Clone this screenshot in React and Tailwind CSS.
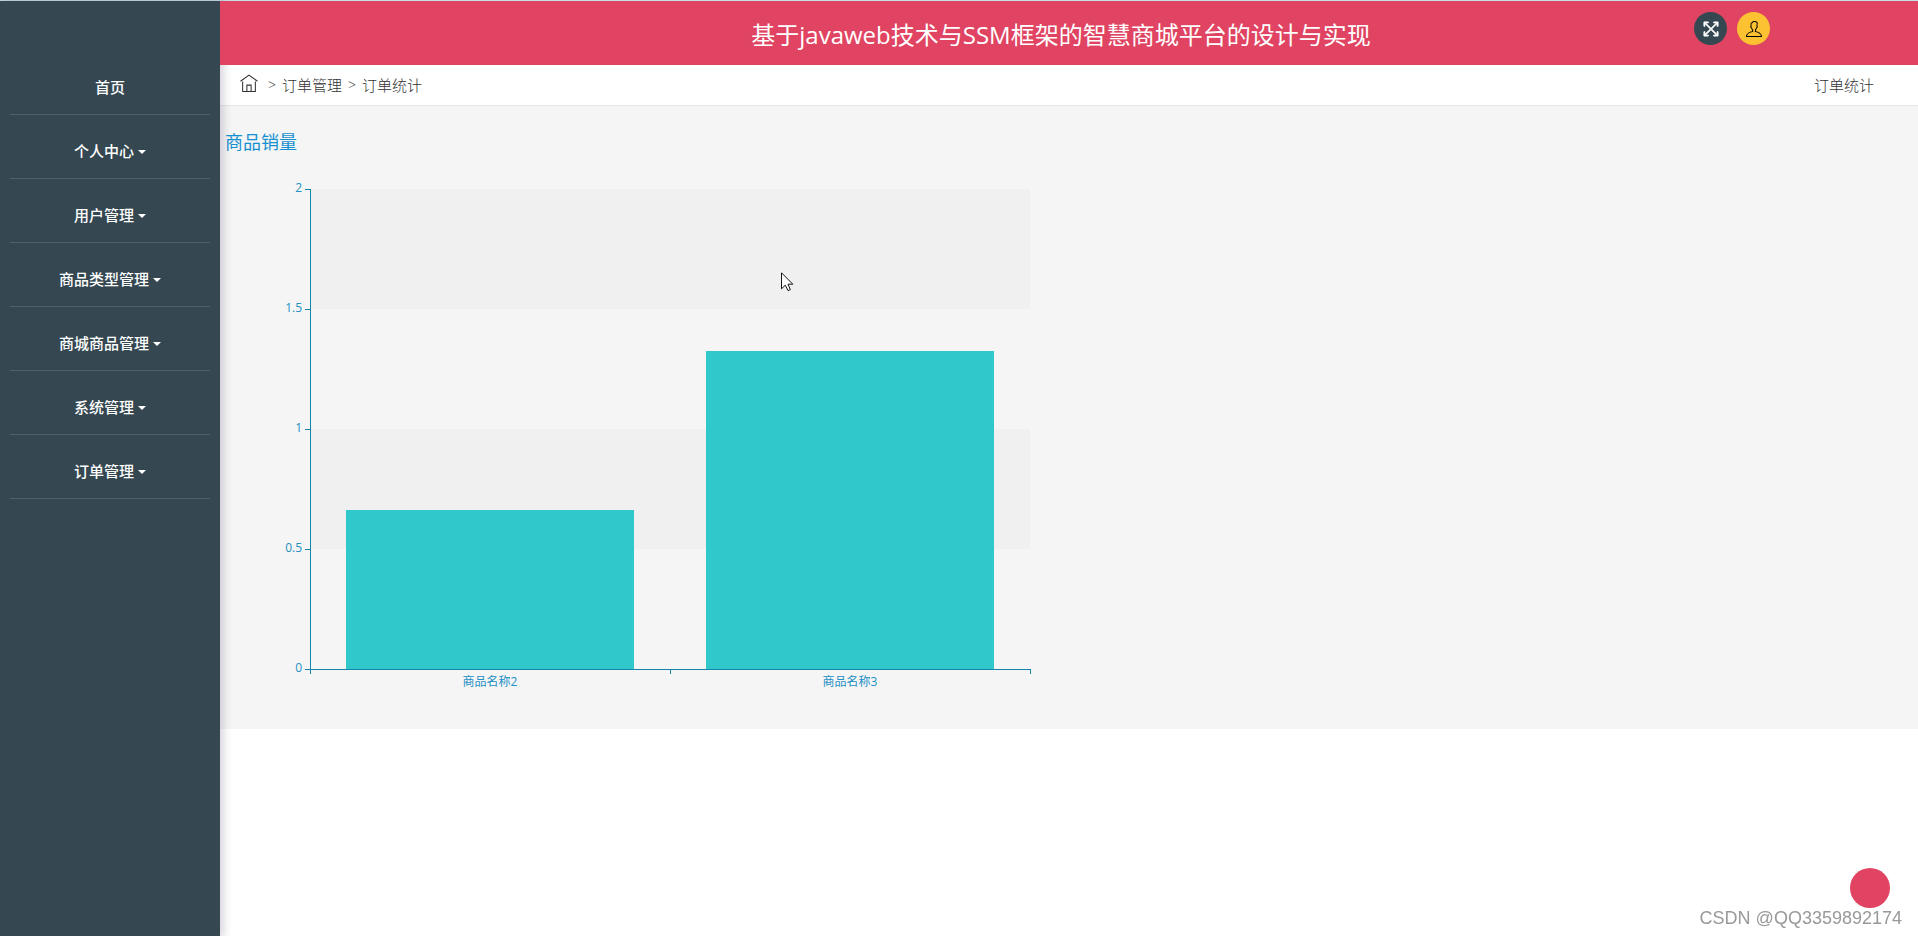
import React from "react";
import { TfiHome, TfiFullscreen, TfiUser } from "react-icons/tfi";

const menus = [
    { name: "首页", children: false },
    { name: "个人中心", children: true },
    { name: "用户管理", children: true },
    { name: "商品类型管理", children: true },
    { name: "商城商品管理", children: true },
    { name: "系统管理", children: true },
    { name: "订单管理", children: true },
];

const sales = [
    { name: "商品名称2", value: 0.6625 },
    { name: "商品名称3", value: 1.325 },
];

// chart geometry
const LEFT = 90;
const TOP = 60;
const PLOT_W = 720;
const PLOT_H = 480;
const MAX = 2;
const BOTTOM = TOP + PLOT_H;

function Sidebar() {
    return (
        <aside className="relative z-10 w-[220px] shrink-0 bg-[#354852] pt-[50px] shadow-[2px_0_8px_2px_rgba(60,55,90,0.2)]">
            <nav>
                <ul className="px-2.5">
                    {menus.map((item) => (
                        <li key={item.name} className="border-b border-[#4f626c]">
                            <button
                                type="button"
                                className="flex h-[63px] w-full items-center justify-center gap-1 pt-2.5 text-[15px] font-medium text-white"
                            >
                                {item.name}
                                {item.children && (
                                    <span className="border-x-4 border-t-4 border-x-transparent border-t-white"></span>
                                )}
                            </button>
                        </li>
                    ))}
                </ul>
            </nav>
        </aside>
    );
}

function Header() {
    return (
        <header className="relative z-20 flex h-16 items-center bg-[#e04462]">
            <h1 className="flex-1 pt-1 pr-4 text-center text-2xl text-white">
                基于javaweb技术与SSM框架的智慧商城平台的设计与实现
            </h1>
            <div className="absolute top-[11px] right-[148px] flex gap-2.5">
                <button
                    type="button"
                    aria-label="全屏"
                    className="flex size-[33px] items-center justify-center rounded-full bg-[#354852] text-white"
                >
                    <TfiFullscreen className="size-4 stroke-white stroke-1" />
                </button>
                <button
                    type="button"
                    aria-label="个人中心"
                    className="flex size-[33px] items-center justify-center rounded-full bg-[#fcc232] text-black"
                >
                    <TfiUser className="size-4" />
                </button>
            </div>
        </header>
    );
}

function Breadcrumb() {
    return (
        <div className="flex h-[41px] items-center justify-between border-b border-[#e6e6e6] bg-white pr-11 pl-5 text-[15px] font-light text-[#333]">
            <nav className="flex items-center">
                <a href="#" aria-label="首页" className="mr-2.5 pb-1">
                    <TfiHome className="size-[18px]" />
                </a>
                <span className="mr-1.5 text-sm">&gt;</span>
                <a href="#">订单管理</a>
                <span className="mx-1.5 text-sm">&gt;</span>
                <a href="#">订单统计</a>
            </nav>
            <span>订单统计</span>
        </div>
    );
}

function SalesChart() {
    const step = PLOT_W / sales.length;
    const barWidth = step * 0.8;
    const ticks = [0, 0.5, 1, 1.5, 2];
    const y = (v) => BOTTOM - (v / MAX) * PLOT_H;

    return (
        <svg width="900" height="600" viewBox="0 0 900 600" className="block" role="img" aria-label="商品销量">
            <text x="5" y="20" fontSize="18" fill="#1790cf">商品销量</text>

            {/* split areas */}
            <rect x={LEFT} y={y(2)} width={PLOT_W} height={PLOT_H / 4} fill="#f0f0f0" />
            <rect x={LEFT} y={y(1)} width={PLOT_W} height={PLOT_H / 4} fill="#f0f0f0" />

            {sales.map((s, i) => (
                <rect
                    key={s.name}
                    x={LEFT + i * step + (step - barWidth) / 2}
                    y={y(s.value)}
                    width={barWidth}
                    height={BOTTOM - y(s.value)}
                    fill="#30c8ca"
                />
            ))}

            <g stroke="#1484a8" shapeRendering="crispEdges">
                <line x1={LEFT + 0.5} y1={TOP} x2={LEFT + 0.5} y2={BOTTOM + 5} />
                <line x1={LEFT} y1={BOTTOM + 0.5} x2={LEFT + PLOT_W + 1} y2={BOTTOM + 0.5} />
                {ticks.map((t) => (
                    <line key={t} x1={LEFT - 5} y1={y(t) + 0.5} x2={LEFT} y2={y(t) + 0.5} />
                ))}
                {[1, 2].map((n) => (
                    <line key={n} x1={LEFT + n * step + 0.5} y1={BOTTOM} x2={LEFT + n * step + 0.5} y2={BOTTOM + 5} />
                ))}
            </g>

            <g fontSize="12" fill="#2290c3">
                {ticks.map((t) => (
                    <text key={t} x={LEFT - 8} y={y(t) + 3} textAnchor="end">{t}</text>
                ))}
                {sales.map((s, i) => (
                    <text key={s.name} x={LEFT + (i + 0.5) * step} y={BOTTOM + 17} textAnchor="middle">{s.name}</text>
                ))}
            </g>
        </svg>
    );
}

function App() {
    return (
        <div className="flex min-h-screen flex-col border-t border-[#c9dfe6] bg-white font-['Open_Sans','Noto_Sans_CJK_SC',sans-serif]">
            <div className="flex flex-1">
                <Sidebar />
                <div className="flex min-w-0 flex-1 flex-col">
                    <Header />
                    <Breadcrumb />
                    <main className="bg-[#f5f5f5] pt-[23px]">
                        <SalesChart />
                    </main>
                </div>
            </div>

            <button
                type="button"
                aria-label="返回顶部"
                className="fixed right-7 bottom-7 z-30 size-10 rounded-full bg-[#e04462]"
            ></button>
            <p className="fixed right-4 bottom-2 z-30 font-['Liberation_Sans',sans-serif] text-lg leading-5 text-[#999]">
                CSDN @QQ3359892174
            </p>

            {/* mouse pointer */}
            <svg
                className="pointer-events-none fixed top-[272px] left-[781px] z-30"
                width="13"
                height="20"
                viewBox="0 0 13 20"
            >
                <path
                    d="M0.5 0.8V16.8L4.3 13.2L7 18.6L9.3 17.6L7 12.2H11.8Z"
                    fill="#fff"
                    stroke="#111"
                    strokeWidth="1"
                />
            </svg>
        </div>
    );
}

export default App;
